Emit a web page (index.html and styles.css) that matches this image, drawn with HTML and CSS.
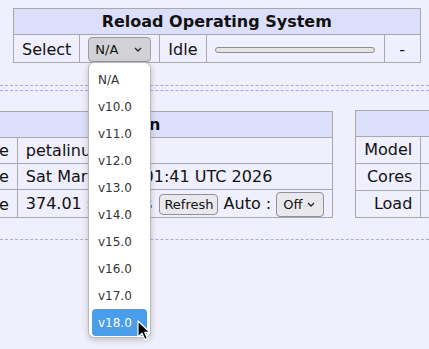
FILE: index.html
```html
<!DOCTYPE html>
<html lang="en">
<head>
    <meta charset="UTF-8">
    <meta name="viewport" content="width=device-width, initial-scale=1.0">
    <title>Board Status</title>
    <link rel="stylesheet" href="styles.css">
</head>
<body>
    <table class="panel reload">
        <tr><th colspan="5">Reload Operating System</th></tr>
        <tr class="control-row">
            <td>Select</td>
            <td>
                <span class="select select-open">
                    <span>N/A</span>
                    <svg class="chevron" width="8" height="5" viewBox="0 0 8 5"><path d="M1 1 L4 4 L7 1" fill="none" stroke="#222" stroke-width="1.3"/></svg>
                </span>
            </td>
            <td>Idle</td>
            <td class="progress-cell"><div class="progress"></div></td>
            <td class="result-cell">-</td>
        </tr>
    </table>

    <div class="rule rule-double"></div>

    <div class="panels">
        <table class="panel info">
            <tr><th colspan="2">Session</th></tr>
            <tr><td class="key">Hostname</td><td>petalinux</td></tr>
            <tr><td class="key">Date</td><td>Sat Mar 14 10:01:41 UTC 2026</td></tr>
            <tr class="control-row">
                <td class="key">Uptime</td>
                <td>374.01 seconds <button class="btn">Refresh</button> Auto : <span class="select select-small">
                    <span>Off</span>
                    <svg class="chevron" width="8" height="5" viewBox="0 0 8 5"><path d="M1 1 L4 4 L7 1" fill="none" stroke="#222" stroke-width="1.3"/></svg>
                </span></td>
            </tr>
        </table>
        <table class="panel cpu">
            <tr><th colspan="2">CPU Information</th></tr>
            <tr><td class="key">Model</td><td class="val">ARMv8 Processor rev 4 (v8l)</td></tr>
            <tr><td class="key">Cores</td><td class="val">4</td></tr>
            <tr><td class="key">Load</td><td class="val">0.00 0.01 0.00</td></tr>
        </table>
    </div>

    <div class="rule"></div>

    <!-- open list of the version select -->
    <ul class="dropdown">
        <li>N/A</li>
        <li>v10.0</li>
        <li>v11.0</li>
        <li>v12.0</li>
        <li>v13.0</li>
        <li>v14.0</li>
        <li>v15.0</li>
        <li>v16.0</li>
        <li>v17.0</li>
        <li class="active">v18.0</li>
    </ul>

    <svg class="cursor" width="14" height="22" viewBox="0 0 14 22">
        <path d="M1 1 L1 17 L5 13.2 L7.8 19.6 L10.4 18.5 L7.7 12.3 L12.8 12.3 Z" fill="#000" stroke="#fff" stroke-width="1.2" stroke-linejoin="round"/>
    </svg>
</body>
</html>
```

FILE: styles.css
```css
html {
    overflow: hidden;
}

body {
    margin: 0;
    padding-top: 8px;
    min-height: 341px;
    position: relative;
    background-color: #efeffd;
    font-family: 'DejaVu Sans', sans-serif;
    font-size: 16px;
    color: #111;
}

.panel {
    border-collapse: collapse;
    flex: none;
}

.panel th,
.panel td {
    border: 1px solid #a9a9a9;
    padding: 2px 8px;
    line-height: 21px;
    white-space: nowrap;
}

.panel th {
    background-color: #dcdffa;
    font-weight: bold;
}

.panel .control-row td {
    padding: 2px 8px 0;
}

.reload {
    margin-left: 13px;
}

.progress-cell {
    width: 161px;
}

.progress {
    width: 160px;
    height: 6px;
    box-sizing: border-box;
    border: 1px solid #8d8d8d;
    border-radius: 3px;
    background-color: #e6e6e6;
}

.result-cell {
    width: 19px;
    text-align: center;
}

.select {
    display: inline-flex;
    align-items: center;
    justify-content: space-between;
    box-sizing: border-box;
    width: 63px;
    height: 25px;
    padding: 0 8px 0 6px;
    border: 1px solid #8f8f9d;
    border-radius: 4px;
    background-color: #e9e9ed;
    font-size: 13px;
    line-height: 1;
    vertical-align: middle;
}

.select-open {
    background-color: #d2d2d6;
    border-color: #9a9a9f;
}

.select-small {
    width: 48px;
}

.btn {
    height: 21px;
    margin-left: 2px;
    padding: 0 4px;
    border: 1px solid #8f8f9d;
    border-radius: 4px;
    background-color: #e9e9ed;
    font-family: 'DejaVu Sans', sans-serif;
    font-size: 13px;
    color: #111;
    vertical-align: middle;
}

.rule {
    margin-top: 21px;
    border-top: 1px dashed #a8a8f2;
}

.rule-double {
    margin-top: 22px;
    height: 4px;
    border-bottom: 1px dashed #a8a8f2;
}

.panels {
    display: flex;
    align-items: flex-end;
    gap: 22px;
    margin-top: 19px;
    margin-left: -82px;
}

.key {
    text-align: right;
}

.cpu td {
    line-height: 22px;
}

.cpu .val {
    text-align: center;
    padding: 2px 24px;
}

.dropdown {
    position: absolute;
    left: 88px;
    top: 62px;
    width: 55px;
    margin: 0;
    padding: 3px 3px 1px;
    list-style: none;
    background-color: #fff;
    border: 1px solid #b8b8b8;
    border-radius: 6px;
    box-shadow: 0 2px 6px rgba(0, 0, 0, 0.2);
}

.dropdown li {
    height: 27px;
    line-height: 29px;
    padding-left: 6px;
    border-radius: 4px;
    font-size: 12px;
    color: #333;
}

.dropdown li.active {
    background-color: #4a9de9;
    color: #fff;
}

.cursor {
    position: absolute;
    left: 137px;
    top: 320px;
}
```
